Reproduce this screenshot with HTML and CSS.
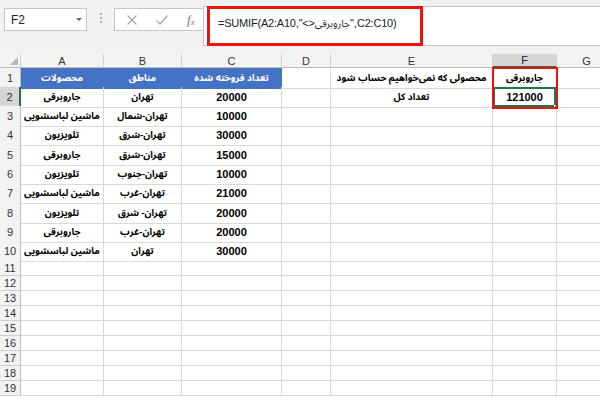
FILE: index.html
```html
<!DOCTYPE html>
<html lang="fa">
<head>
<meta charset="utf-8">
<title>SUMIF</title>
<link rel="stylesheet" href="styles.css">
</head>
<body>
<div class="topbar">
  <div class="namebox"><span>F2</span><span class="caret"></span></div>
  <div class="dots"><i></i><i></i><i></i></div>
  <div class="btnbox">
    <svg class="ico" width="12" height="12" viewBox="0 0 12 12"><path d="M1.5 1.5 L10.5 10.5 M10.5 1.5 L1.5 10.5" stroke="#a8a8a8" stroke-width="1.3" fill="none"/></svg>
    <svg class="ico" width="14" height="12" viewBox="0 0 14 12"><path d="M1.5 6.5 L5 10 L12.5 1.5" stroke="#a8a8a8" stroke-width="1.3" fill="none"/></svg>
    <span class="fx">f<sub>x</sub></span>
  </div>
  <div class="formula">
    <span class="ftext">=SUMIF(A2:A10,"&lt;&gt;<span class="far">جاروبرقی</span>",C2:C10)</span>
    <div class="redbox"></div>
  </div>
</div>
<div class="gap"></div>
<div class="sheet">
  <div class="row hdr">
    <div class="c corner"><span class="tri"></span></div>
    <div class="c ch">A</div><div class="c ch">B</div><div class="c ch">C</div><div class="c ch">D</div><div class="c ch">E</div><div class="c ch sel">F</div><div class="c ch">G</div>
  </div>
  <div class="row r19">
    <div class="c rh">1</div>
    <div class="c blue">محصولات</div><div class="c blue">مناطق</div><div class="c blue">تعداد فروخته شده</div><div class="c"></div><div class="c" dir="rtl">محصولی که نمی‌خواهیم حساب شود</div><div class="c">جاروبرقی</div><div class="c"></div>
  </div>
  <div class="row r19">
    <div class="c rh rsel">2</div>
    <div class="c">جاروبرقی</div><div class="c">تهران</div><div class="c n">20000</div><div class="c"></div><div class="c">تعداد کل</div><div class="c n active">121000<span class="handle"></span></div><div class="c"></div>
  </div>
  <div class="row r19">
    <div class="c rh">3</div>
    <div class="c">ماشین لباسشویی</div><div class="c">تهران-شمال</div><div class="c n">10000</div><div class="c"></div><div class="c"></div><div class="c"></div><div class="c"></div>
  </div>
  <div class="row r20">
    <div class="c rh">4</div>
    <div class="c">تلویزیون</div><div class="c">تهران-شرق</div><div class="c n">30000</div><div class="c"></div><div class="c"></div><div class="c"></div><div class="c"></div>
  </div>
  <div class="row r19">
    <div class="c rh">5</div>
    <div class="c">جاروبرقی</div><div class="c">تهران-شرق</div><div class="c n">15000</div><div class="c"></div><div class="c"></div><div class="c"></div><div class="c"></div>
  </div>
  <div class="row r19">
    <div class="c rh">6</div>
    <div class="c">تلویزیون</div><div class="c">تهران-جنوب</div><div class="c n">10000</div><div class="c"></div><div class="c"></div><div class="c"></div><div class="c"></div>
  </div>
  <div class="row r20">
    <div class="c rh">7</div>
    <div class="c">ماشین لباسشویی</div><div class="c">تهران-غرب</div><div class="c n">21000</div><div class="c"></div><div class="c"></div><div class="c"></div><div class="c"></div>
  </div>
  <div class="row r19">
    <div class="c rh">8</div>
    <div class="c">تلویزیون</div><div class="c" dir="rtl">تهران- شرق</div><div class="c n">20000</div><div class="c"></div><div class="c"></div><div class="c"></div><div class="c"></div>
  </div>
  <div class="row r19">
    <div class="c rh">9</div>
    <div class="c">جاروبرقی</div><div class="c">تهران-غرب</div><div class="c n">20000</div><div class="c"></div><div class="c"></div><div class="c"></div><div class="c"></div>
  </div>
  <div class="row r20">
    <div class="c rh">10</div>
    <div class="c">ماشین لباسشویی</div><div class="c">تهران</div><div class="c n">30000</div><div class="c"></div><div class="c"></div><div class="c"></div><div class="c"></div>
  </div>
  <div class="row r15"><div class="c rh">11</div><div class="c"></div><div class="c"></div><div class="c"></div><div class="c"></div><div class="c"></div><div class="c"></div><div class="c"></div></div>
  <div class="row r15"><div class="c rh">12</div><div class="c"></div><div class="c"></div><div class="c"></div><div class="c"></div><div class="c"></div><div class="c"></div><div class="c"></div></div>
  <div class="row r15"><div class="c rh">13</div><div class="c"></div><div class="c"></div><div class="c"></div><div class="c"></div><div class="c"></div><div class="c"></div><div class="c"></div></div>
  <div class="row r15"><div class="c rh">14</div><div class="c"></div><div class="c"></div><div class="c"></div><div class="c"></div><div class="c"></div><div class="c"></div><div class="c"></div></div>
  <div class="row r15"><div class="c rh">15</div><div class="c"></div><div class="c"></div><div class="c"></div><div class="c"></div><div class="c"></div><div class="c"></div><div class="c"></div></div>
  <div class="row r15"><div class="c rh">16</div><div class="c"></div><div class="c"></div><div class="c"></div><div class="c"></div><div class="c"></div><div class="c"></div><div class="c"></div></div>
  <div class="row r15"><div class="c rh">17</div><div class="c"></div><div class="c"></div><div class="c"></div><div class="c"></div><div class="c"></div><div class="c"></div><div class="c"></div></div>
  <div class="row r15"><div class="c rh">18</div><div class="c"></div><div class="c"></div><div class="c"></div><div class="c"></div><div class="c"></div><div class="c"></div><div class="c"></div></div>
  <div class="row r15"><div class="c rh">19</div><div class="c"></div><div class="c"></div><div class="c"></div><div class="c"></div><div class="c"></div><div class="c"></div><div class="c"></div></div>
  <div class="annot"></div>
</div>
</body>
</html>
```

FILE: styles.css
```css
html, body {
  margin: 0;
  padding: 0;
  width: 600px;
  height: 400px;
  overflow: hidden;
  background: #ffffff;
  font-family: "Liberation Sans", "DejaVu Sans", sans-serif;
}

.topbar {
  display: flex;
  align-items: flex-start;
  height: 46px;
  padding: 6px 0 0 4px;
  box-sizing: border-box;
  background: #f1f1f1;
}

.namebox {
  margin-top: 2px;
  width: 83px;
  height: 23px;
  box-sizing: border-box;
  background: #ffffff;
  border: 1px solid #c6c6c6;
  display: flex;
  align-items: center;
  justify-content: space-between;
  padding: 0 4px 0 6px;
  font-size: 12px;
  color: #222;
}

.caret {
  width: 0;
  height: 0;
  border-left: 3px solid transparent;
  border-right: 3px solid transparent;
  border-top: 3px solid #666;
}

.dots {
  margin: 7px 0 0 0;
  width: 27px;
  display: flex;
  flex-direction: column;
  align-items: center;
  gap: 2px;
}

.dots i {
  display: block;
  width: 2px;
  height: 2px;
  background: #b0b0b0;
}

.btnbox {
  margin-top: 2px;
  width: 89px;
  height: 23px;
  box-sizing: border-box;
  background: #ffffff;
  border: 1px solid #c6c6c6;
  border-right: none;
  display: flex;
  align-items: center;
  padding-left: 11px;
  gap: 17px;
}

.fx {
  font-family: "Liberation Serif", serif;
  font-style: italic;
  font-size: 13px;
  color: #777;
  margin-left: 1px;
}

.fx sub {
  font-size: 9px;
  vertical-align: -1px;
}

.formula {
  position: relative;
  flex: 1;
  height: 40px;
  box-sizing: border-box;
  background: #ffffff;
  border: 1px solid #c6c6c6;
  border-right: none;
  padding: 6px 0 0 14px;
  font-size: 11px;
  color: #222;
}

.ftext {
  font-family: "Liberation Sans", sans-serif;
  letter-spacing: -0.2px;
}

.far {
  font-family: "Noto Sans Arabic", "Noto Naskh Arabic", "DejaVu Sans Condensed", "DejaVu Sans", sans-serif;
  font-size: 10px;
  letter-spacing: 0;
}

.redbox {
  position: absolute;
  left: 3px;
  top: -1px;
  width: 216px;
  height: 40px;
  box-sizing: border-box;
  border: 3px solid #ee1111;
}

.gap {
  height: 8px;
  background: #f1f1f1;
}

.sheet {
  position: relative;
}

.row {
  display: grid;
  grid-template-columns: 21px 83px 78px 100px 49px 162px 64px 60px;
}

.hdr { height: 14px; }
.r19 { height: 19px; }
.r20 { height: 20px; }
.r15 { height: 15px; }

.c {
  box-sizing: border-box;
  border-right: 1px solid #d9d9d9;
  border-bottom: 1px solid #d9d9d9;
  display: flex;
  align-items: center;
  justify-content: center;
  font-family: "Noto Sans Arabic", "Noto Naskh Arabic", "DejaVu Sans Condensed", "DejaVu Sans", sans-serif;
  font-size: 9.5px;
  font-weight: bold;
  color: #000;
  white-space: nowrap;
  overflow: visible;
  position: relative;
}

.c.n {
  font-family: "Liberation Sans", sans-serif;
  font-size: 11px;
}

.hdr .c {
  background: #f3f3f3;
  border-right: 1px solid #d0d0d0;
  border-bottom: 1px solid #bcbcbc;
  font-family: "Liberation Sans", sans-serif;
  font-weight: normal;
  color: #333;
  font-size: 11px;
}

.hdr .ch.sel {
  background: #d6d6d6;
  border-bottom: 2px solid #217346;
  color: #222;
}

.tri {
  position: absolute;
  right: 2px;
  bottom: 2px;
  width: 0;
  height: 0;
  border-left: 8px solid transparent;
  border-bottom: 8px solid #b8b8b8;
}

.c.rh {
  background: #f3f3f3;
  border-right: 1px solid #bcbcbc;
  border-bottom: 1px solid #d0d0d0;
  font-family: "Liberation Sans", sans-serif;
  font-weight: normal;
  color: #333;
  font-size: 11px;
}

.c.rh.rsel {
  background: #d6d6d6;
  border-right: 2px solid #217346;
}

.c.blue {
  background: #4472c4;
  color: #ffffff;
  border-right-color: #4472c4;
  border-bottom-color: #4472c4;
}

.c.active {
  box-shadow: inset 0 0 0 2px #217346;
}

.handle {
  position: absolute;
  right: -3px;
  bottom: -3px;
  width: 5px;
  height: 5px;
  background: #217346;
  border: 1px solid #fff;
  box-sizing: border-box;
}

.annot {
  position: absolute;
  left: 492px;
  top: 13px;
  width: 66px;
  height: 42px;
  box-sizing: border-box;
  border: 2px solid #ee1111;
}
```
